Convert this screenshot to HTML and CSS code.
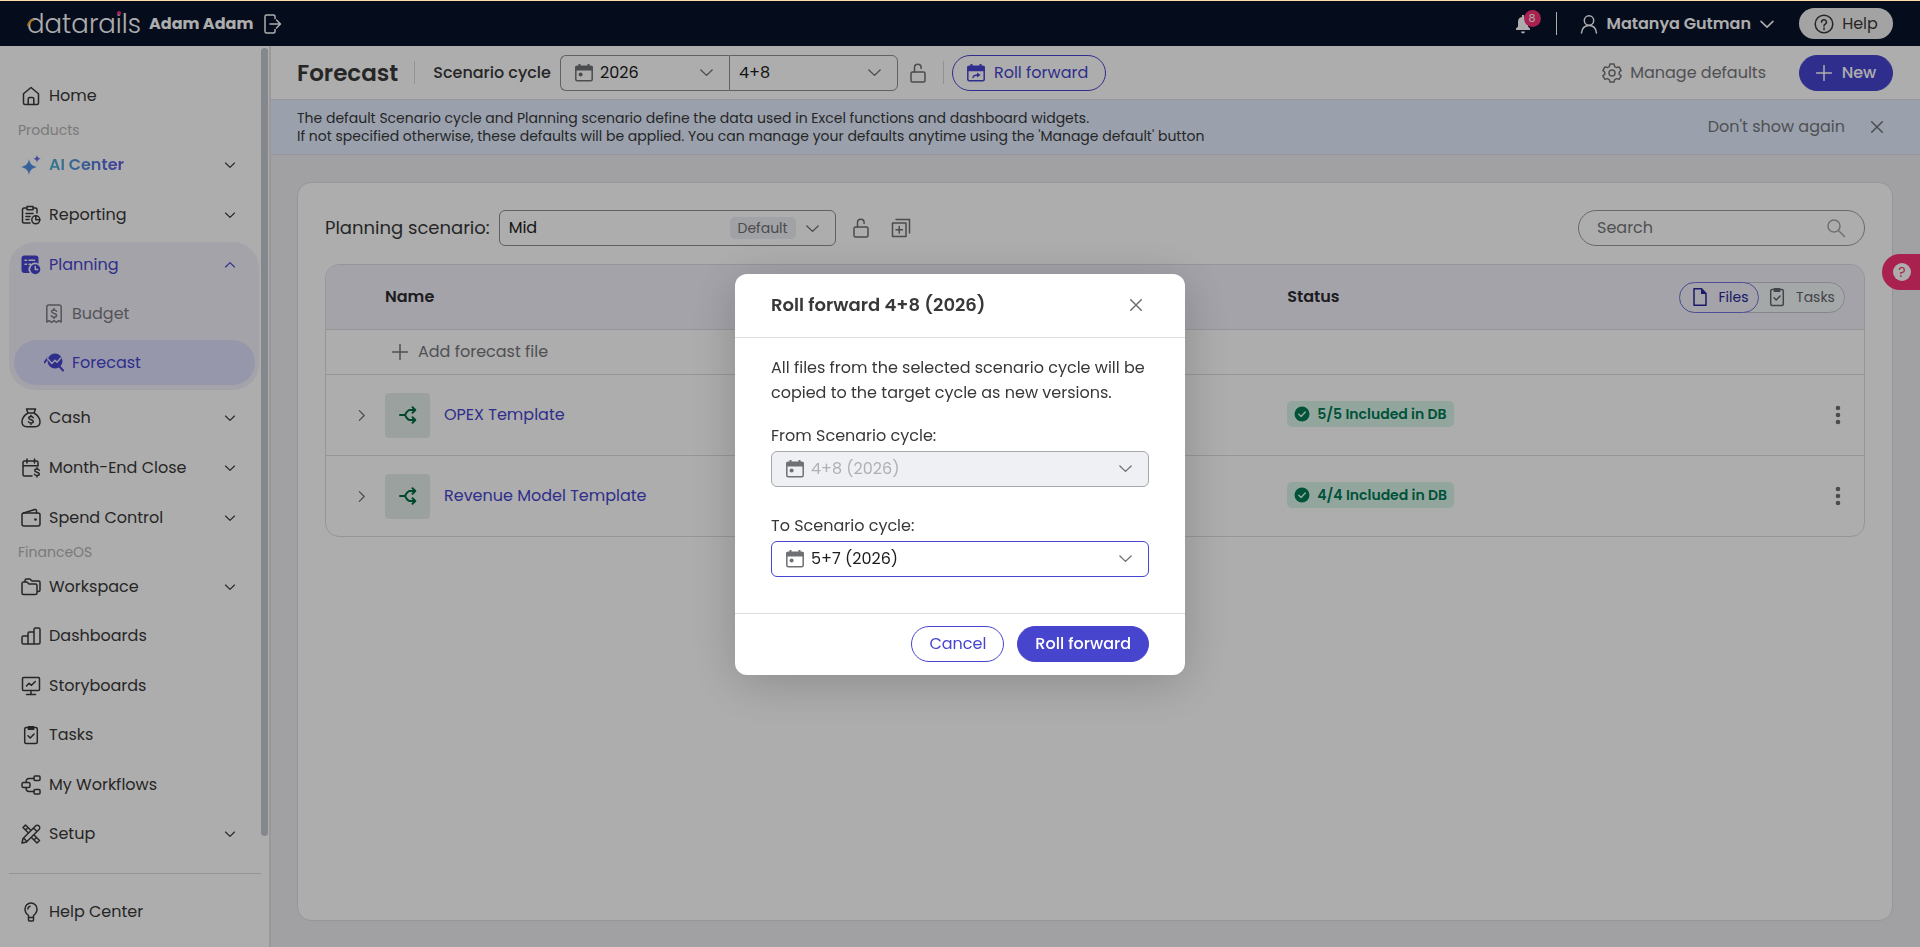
FILE: index.html
```
<!DOCTYPE html>
<html lang="en">
<head>
  <meta charset="UTF-8">
  <meta name="viewport" content="width=device-width, initial-scale=1.0">
  <title>Forecast - Datarails</title>
  <link rel="stylesheet" href="styles.css">
</head>
<body>
  <svg class="sprite" aria-hidden="true">
    <symbol id="i-down" viewBox="0 0 12 12"><path d="M1.5 4 6 8.3 10.5 4"/></symbol>
    <symbol id="i-up" viewBox="0 0 12 12"><path d="M1.5 8 6 3.7 10.5 8"/></symbol>
    <symbol id="i-right" viewBox="0 0 12 12"><path d="M4 1.5 8.5 6 4 10.5"/></symbol>
    <symbol id="i-close" viewBox="0 0 12 12"><path d="M.7.7l10.6 10.6M11.3.7.7 11.3"/></symbol>
    <symbol id="i-plus" viewBox="0 0 16 16"><path d="M8 .5v15M.5 8h15"/></symbol>
    <symbol id="i-cal" viewBox="0 0 20 20"><rect x="1.8" y="3.2" width="16.4" height="14.6" rx="1.5"/><path d="M1.5 3h17v4.5h-17zM4.5 1h2v3h-2zM13.5 1h2v3h-2z" fill="currentColor" stroke="none"/><circle cx="6.6" cy="11.4" r="2" fill="currentColor" stroke="none"/></symbol>
    <symbol id="i-calroll" viewBox="0 0 20 20"><rect x="1.8" y="3.2" width="16.4" height="14.6" rx="1.5"/><path d="M1.5 3h17v5.3h-17zM4.5 1h2v3h-2zM13.5 1h2v3h-2z" fill="currentColor" stroke="none"/><path d="M7 14.5c.3-1.8 1.6-2.5 5-2.5"/><path d="m11 9.6 3.6 2.5-3.6 2.5z" fill="currentColor" stroke="none"/></symbol>
    <symbol id="i-lock" viewBox="0 0 20 20"><rect x="3" y="9" width="14" height="10" rx="1.5"/><path d="M6.5 9V4.600a3.300 3.300 0 0 1 6.600 0V5.600"/></symbol>
    <symbol id="i-task" viewBox="0 0 20 20"><rect x="3.700" y="2.500" width="12.600" height="16" rx="1.500"/><path d="M6.700 1h6.600v4H6.700z" fill="currentColor" stroke="none"/><path d="m7 10.800 2.200 2.200 3.900-4"/></symbol>
    <symbol id="i-share" viewBox="0 0 20 20"><path d="M2 10h5c1.500-3 2.500-5 5-5h5M7 10c1.500 3 2.500 5 5 5h5M14.500 2.300 17.300 5l-2.800 2.700M14.500 12.300l2.800 2.700-2.800 2.700"/></symbol>
    <symbol id="i-check" viewBox="0 0 16 16"><circle cx="8" cy="8" r="7.500" fill="currentColor" stroke="none"/><path d="m4.800 8.300 2.300 2.200 4.200-4.500" stroke="#d9f5e9"/></symbol>
    <symbol id="i-more" viewBox="0 0 6 20"><g fill="currentColor" stroke="none"><circle cx="3" cy="3" r="2.300"/><circle cx="3" cy="10" r="2.300"/><circle cx="3" cy="17" r="2.300"/></g></symbol>
  </svg>

  <header class="topbar">
    <a class="logo" href="#" aria-label="datarails">datarails<i class="logo-arc"></i><i class="logo-dot"></i></a>
    <span class="company">Adam Adam</span>
    <button class="icon-btn" aria-label="Switch company"><svg class="icon" viewBox="0 0 20 20"><path d="M12 4.500V2.500A1.500 1.500 0 0 0 10.500 1H3.500A1.500 1.500 0 0 0 2 2.500v15A1.500 1.500 0 0 0 3.500 19h7a1.500 1.500 0 0 0 1.500-1.500V15.500M7 10H17M13.500 6l4 4-4 4"/></svg></button>
    <div class="topbar-right">
      <button class="bell" aria-label="Notifications"><svg class="icon" viewBox="0 0 20 20"><path d="M3 16v-1.500l2-2V8a5 5 0 0 1 4-5V1h2v2a5 5 0 0 1 4 5v4.500l2 2V16zM8 17.500h4a2 2 0 0 1-4 0z" fill="currentColor" stroke="none"/></svg><span class="bell-count">8</span></button>
      <span class="topbar-line"></span>
      <button class="user"><svg class="icon" viewBox="0 0 20 20"><circle cx="10" cy="6.500" r="4.700"/><path d="M2.500 19c.5-4.500 3.200-7.500 7.500-7.500s7 3 7.500 7.500"/></svg>Matanya Gutman<svg class="icon chev-lg"><use href="#i-down"/></svg></button>
      <button class="help"><svg class="icon" viewBox="0 0 20 20"><circle cx="10" cy="10" r="8.800"/><path d="M7.600 8.200a2.400 2.400 0 1 1 3.600 2c-.8.500-1.200.9-1.200 1.900M10 14v1.400"/></svg>Help</button>
    </div>
  </header>

  <div class="layout">
    <aside class="sidebar">
      <nav class="menu">
        <a class="menu-item" href="#"><svg class="icon" viewBox="0 0 20 20"><path d="M2.500 7.800 10 1.500l7.500 6.300V17a1.500 1.500 0 0 1-1.500 1.500H4A1.500 1.500 0 0 1 2.500 17zM7.200 18.500V13a1.500 1.500 0 0 1 1.500-1.500h2.600a1.500 1.500 0 0 1 1.500 1.500v5.500"/></svg>Home</a>
        <h2 class="menu-label">Products</h2>
        <ul class="menu-list">
          <li><a class="menu-item" href="#"><svg class="icon" viewBox="0 0 20 20"><g fill="#538ee8" stroke="none"><path d="M8 4c1 5 2.500 6.500 8 8-5.500 1.500-7 3-8 8-1-5-2.500-6.500-8-8 5.500-1.500 7-3 8-8z"/><path d="M16 0c.5 2.400 1.200 3 3.800 3.700-2.600.7-3.300 1.400-3.800 3.700-.5-2.300-1.200-3-3.800-3.700C14.800 3 15.500 2.400 16 0z" fill="#6a6ae6"/></g></svg><span class="ai-text">AI Center</span><svg class="icon chev"><use href="#i-down"/></svg></a></li>
          <li><a class="menu-item" href="#"><svg class="icon" viewBox="0 0 20 20"><path d="M6 3H3a1.500 1.500 0 0 0-1.500 1.500v12A1.500 1.500 0 0 0 3 18h6M12 3h2.500A1.500 1.500 0 0 1 16 4.500V8M6 1.500h6v3.300H6zM5 8.500h7M5 11.500h4M5 14.500h3"/><circle cx="14.800" cy="14.800" r="4"/><path d="M14.800 10.800v4h4"/></svg>Reporting<svg class="icon chev"><use href="#i-down"/></svg></a></li>
          <li class="menu-group">
            <a class="menu-item open" href="#"><svg class="icon" viewBox="0 0 20 20"><path d="M3.500.500h11a3 3 0 0 1 3 3v5.200a6.500 6.500 0 0 0-8.700 9.300H3.500a3 3 0 0 1-3-3V3.500a3 3 0 0 1 3-3z" fill="currentColor" stroke="none"/><path d="M4 5.200h1.500M8 5.200h5.500M4 9.200h1.500M8 9.200h1.500" stroke="#f1f0fa"/><circle cx="14.300" cy="14.300" r="5" fill="currentColor" stroke="none"/><path d="M14.300 11.500v3h2.400" stroke="#f1f0fa"/></svg>Planning<svg class="icon chev"><use href="#i-up"/></svg></a>
            <a class="menu-item sub" href="#"><svg class="icon" viewBox="0 0 20 20"><path d="M2.800 18V3a2 2 0 0 1 2-2h10.400a2 2 0 0 1 2 2v15l-2.400-1.300-2.400 1.600-2.400-1.600-2.400 1.600-2.400-1.600zM12.500 7.200c-.4-1-1.200-1.300-2.500-1.300-1.500 0-2.400.6-2.400 1.700 0 2.700 5 1 5 3.800 0 1.100-1 1.700-2.600 1.700-1.400 0-2.300-.4-2.700-1.400M10 4.500v1.300M10 13.200v1.300"/></svg>Budget</a>
            <a class="menu-item sub current" href="#"><svg class="icon" viewBox="0 0 20 20"><circle cx="11" cy="8" r="7.500" fill="currentColor" stroke="none"/><path d="m15.500 13.500 3.500 4M.500 9.500l3-4" stroke-width="2"/><path d="m3.500 5.500 4.300 5 3.200-3.300 2 2 4-4.500" stroke="#dfdffd"/></svg>Forecast</a>
          </li>
          <li><a class="menu-item" href="#"><svg class="icon" viewBox="0 0 20 20"><path d="M7 5 5.500 1h9L13 5M6.500 5h7M7 5c-3.500 2-6 5.500-6 9 0 3.200 2 4.700 5 4.700h8c3 0 5-1.500 5-4.700 0-3.500-2.500-7-6-9M12.300 9.700c-.4-.9-1.200-1.200-2.300-1.200-1.300 0-2.200.5-2.200 1.500 0 2.400 4.500 1 4.500 3.500 0 1-.9 1.500-2.300 1.500-1.300 0-2.100-.4-2.500-1.300M10 7.200v1.200M10 15.200v1.200"/></svg>Cash<svg class="icon chev"><use href="#i-down"/></svg></a></li>
          <li><a class="menu-item" href="#"><svg class="icon" viewBox="0 0 20 20"><path d="M11 18H3.500A1.500 1.500 0 0 1 2 16.500v-12A1.500 1.500 0 0 1 3.500 3h12A1.500 1.500 0 0 1 17 4.500V8M2 7.800h15M6 1v4M13.500 1v4M18.300 12.300c-.4-.9-1.200-1.200-2.300-1.200-1.300 0-2.200.5-2.200 1.500 0 2.400 4.500 1 4.500 3.500 0 1-.9 1.500-2.300 1.500-1.300 0-2.100-.4-2.500-1.300M16 9.700v1.200M16 17.700V19"/></svg>Month-End Close<svg class="icon chev"><use href="#i-down"/></svg></a></li>
          <li><a class="menu-item" href="#"><svg class="icon" viewBox="0 0 20 20"><rect x="1" y="5" width="18" height="13" rx="2"/><path d="m2.500 5 11.300-3.500a1.300 1.300 0 0 1 1.700 1.200V5"/><circle cx="14.500" cy="11.500" r="1.300" fill="currentColor" stroke="none"/></svg>Spend Control<svg class="icon chev"><use href="#i-down"/></svg></a></li>
        </ul>
        <h2 class="menu-label">FinanceOS</h2>
        <ul class="menu-list finance">
          <li><a class="menu-item" href="#"><svg class="icon" viewBox="0 0 20 20"><path d="M1 6.500A1.500 1.500 0 0 1 2.500 5H6l2 2h6.500A1.500 1.500 0 0 1 16 8.500V16a1.500 1.500 0 0 1-1.500 1.500h-12A1.500 1.500 0 0 1 1 16zM4 5V3.500A1.500 1.500 0 0 1 5.500 2H9l2 2h6.500A1.500 1.500 0 0 1 19 5.500V13a1.500 1.500 0 0 1-1.500 1.500H16"/></svg>Workspace<svg class="icon chev"><use href="#i-down"/></svg></a></li>
          <li><a class="menu-item" href="#"><svg class="icon" viewBox="0 0 20 20"><path d="M7 18V7.500A1.500 1.500 0 0 1 8.500 6H13v12M7 10H2.500A1.500 1.500 0 0 0 1 11.500v5A1.500 1.500 0 0 0 2.500 18h15a1.500 1.500 0 0 0 1.500-1.500v-13A1.500 1.500 0 0 0 17.500 2h-3A1.500 1.500 0 0 0 13 3.500V6"/></svg>Dashboards</a></li>
          <li><a class="menu-item" href="#"><svg class="icon" viewBox="0 0 20 20"><rect x="1.500" y="1.500" width="17" height="13" rx="1"/><path d="M10 14.500V18.500M5.500 18.500h9M5.500 10 8 7.300l2.500 2L14.300 5.500"/></svg>Storyboards</a></li>
          <li><a class="menu-item" href="#"><svg class="icon"><use href="#i-task"/></svg>Tasks</a></li>
          <li><a class="menu-item" href="#"><svg class="icon" viewBox="0 0 20 20"><rect x="1" y="7.500" width="8" height="5" rx="1.500"/><rect x="13" y="1" width="6" height="4.500" rx="1"/><rect x="13" y="14.500" width="6" height="4.500" rx="1"/><path d="M5 7.500C5 5 6 3.500 8 3.500h5M5 12.500c0 2.500 1 4 3 4h5"/></svg>My Workflows</a></li>
          <li><a class="menu-item" href="#"><svg class="icon" viewBox="0 0 20 20"><path d="M7.500 9 2 3.500 4.500 1 10 6.500M13 11l5.500 5.500L16 19l-5.500-5.500M4.500 6 6 4.500M14 15l1.500-1.500M1 19l1-4.500L14.500 2a2 2 0 0 1 3.500 3.500L5.500 18zM12.500 4l3.500 3.500M2.500 14l3.500 3.500"/></svg>Setup<svg class="icon chev"><use href="#i-down"/></svg></a></li>
        </ul>
      </nav>
      <div class="scroll-thumb"></div>
      <div class="sidebar-foot">
        <a class="menu-item" href="#"><svg class="icon" viewBox="0 0 20 20"><path d="M7.500 15.500v-2C5.500 12 4 10 4 7a6 6 0 0 1 12 0c0 3-1.500 5-3.500 6.500v2zM7.500 15.500V18a1 1 0 0 0 1 1h3a1 1 0 0 0 1-1v-2.500M6.800 7A3 3 0 0 1 9 4.300"/></svg>Help Center</a>
      </div>
    </aside>

    <main class="main">
      <div class="page-head">
        <h1>Forecast</h1>
        <span class="vline"></span>
        <span class="cycle-label">Scenario cycle</span>
        <div class="cycle">
          <label class="select"><svg class="icon lead"><use href="#i-cal"/></svg><select class="with-icon" aria-label="Year"><option>2026</option></select><svg class="icon caret"><use href="#i-down"/></svg></label>
          <label class="select"><select aria-label="Cycle"><option>4+8</option></select><svg class="icon caret"><use href="#i-down"/></svg></label>
        </div>
        <button class="icon-btn gray" aria-label="Unlock cycle"><svg class="icon"><use href="#i-lock"/></svg></button>
        <span class="vline head-line"></span>
        <button class="btn btn-outline"><svg class="icon"><use href="#i-calroll"/></svg>Roll forward</button>
        <button class="text-btn manage"><svg class="icon" viewBox="0 0 20 20"><circle cx="10" cy="10" r="3"/><path d="m8 1h4l.7 2.600 1.800 1L17.100 4l2 3.400-1.900 1.900v1.800l1.900 1.800-2 3.400-2.600-.7-1.800 1L12 19H8l-.7-2.400-1.800-1-2.600.7-2-3.400 1.900-1.800V9.300L.900 7.400l2-3.400 2.600.6 1.800-1z"/></svg>Manage defaults</button>
        <button class="btn btn-primary new"><svg class="icon"><use href="#i-plus"/></svg>New</button>
      </div>

      <div class="banner">
        <p>The default Scenario cycle and Planning scenario define the data used in Excel functions and dashboard widgets.<br>If not specified otherwise, these defaults will be applied. You can manage your defaults anytime using the 'Manage default' button</p>
        <button class="text-btn">Don't show again</button>
        <button class="icon-btn gray x" aria-label="Close"><svg class="icon"><use href="#i-close"/></svg></button>
      </div>

      <section class="card">
        <div class="toolbar">
          <label class="scenario-label" for="scenario">Planning scenario:</label>
          <div class="select scenario">
            <select id="scenario"><option>Mid</option></select>
            <span class="default-tag">Default</span>
            <svg class="icon caret"><use href="#i-down"/></svg>
          </div>
          <button class="icon-btn gray" aria-label="Unlock scenario"><svg class="icon"><use href="#i-lock"/></svg></button>
          <button class="icon-btn gray" aria-label="Duplicate scenario"><svg class="icon" viewBox="0 0 20 20"><rect x="1.500" y="5" width="13.500" height="13.500"/><path d="M5 1.500h13.500V15M8.250 8.500v6.500M5 11.750h6.500"/></svg></button>
          <label class="search"><input type="text" placeholder="Search" aria-label="Search"><svg class="icon" viewBox="0 0 20 20"><circle cx="8" cy="8" r="6"/><path d="m12.500 12.500 6 6"/></svg></label>
        </div>

        <div class="table-wrap">
          <table class="files">
            <colgroup><col class="c-exp"><col><col class="c-status"><col class="c-act"></colgroup>
            <thead>
              <tr><th></th><th>Name</th><th>Status</th><th>
                <div class="toggle">
                  <button class="on"><svg class="icon" viewBox="0 0 20 20"><path d="M4 1.800h7.500L16 6.500v11.700H4z"/><path d="M11 1.500 16.500 7H11z" fill="currentColor" stroke="none"/></svg>Files</button>
                  <button><svg class="icon"><use href="#i-task"/></svg>Tasks</button>
                </div>
              </th></tr>
            </thead>
            <tbody>
              <tr class="add-row"><td></td><td colspan="3"><button class="text-btn add"><svg class="icon"><use href="#i-plus"/></svg>Add forecast file</button></td></tr>
              <tr>
                <td class="exp"><button class="icon-btn gray" aria-label="Expand"><svg class="icon"><use href="#i-right"/></svg></button></td>
                <td><a class="file" href="#"><span class="tile"><svg class="icon"><use href="#i-share"/></svg></span>OPEX Template</a></td>
                <td><span class="status"><svg class="icon"><use href="#i-check"/></svg>5/5 Included in DB</span></td>
                <td class="act"><button class="icon-btn gray" aria-label="More"><svg class="icon dots"><use href="#i-more"/></svg></button></td>
              </tr>
              <tr>
                <td class="exp"><button class="icon-btn gray" aria-label="Expand"><svg class="icon"><use href="#i-right"/></svg></button></td>
                <td><a class="file" href="#"><span class="tile"><svg class="icon"><use href="#i-share"/></svg></span>Revenue Model Template</a></td>
                <td><span class="status"><svg class="icon"><use href="#i-check"/></svg>4/4 Included in DB</span></td>
                <td class="act"><button class="icon-btn gray" aria-label="More"><svg class="icon dots"><use href="#i-more"/></svg></button></td>
              </tr>
            </tbody>
          </table>
        </div>
      </section>
    </main>
  </div>

  <button class="side-help" aria-label="Support"><span>?</span></button>

  <div class="overlay">
    <div class="modal" role="dialog" aria-labelledby="modal-title">
      <div class="modal-head">
        <h2 id="modal-title">Roll forward 4+8 (2026)</h2>
        <button class="icon-btn gray x" aria-label="Close dialog"><svg class="icon"><use href="#i-close"/></svg></button>
      </div>
      <div class="modal-body">
        <p>All files from the selected scenario cycle will be copied to the target cycle as new versions.</p>
        <div class="field">
          <label for="from">From Scenario cycle:</label>
          <div class="select disabled"><svg class="icon lead"><use href="#i-cal"/></svg><select id="from" class="with-icon" disabled><option>4+8 (2026)</option></select><svg class="icon caret"><use href="#i-down"/></svg></div>
        </div>
        <div class="field">
          <label for="to">To Scenario cycle:</label>
          <div class="select focused"><svg class="icon lead"><use href="#i-cal"/></svg><select id="to" class="with-icon"><option>5+7 (2026)</option></select><svg class="icon caret"><use href="#i-down"/></svg></div>
        </div>
      </div>
      <div class="modal-foot">
        <button class="btn btn-outline">Cancel</button>
        <button class="btn btn-primary">Roll forward</button>
      </div>
    </div>
  </div>
</body>
</html>
```

FILE: styles.css
```
* { margin: 0; padding: 0; box-sizing: border-box; }
body {
  height: 100vh; display: flex; flex-direction: column; overflow: hidden;
  border-top: 1px solid #ffdcae;
  font: 16px/24px Poppins, Inter, sans-serif; color: #383838; background: #edeef1;
}
button, input, select { font: inherit; color: inherit; background: none; border: 0; outline: 0; }
button { cursor: pointer; white-space: nowrap; }
a { color: inherit; text-decoration: none; }
ul { list-style: none; }
.sprite { position: absolute; width: 0; height: 0; }
.icon {
  width: 20px; height: 20px; flex: none; fill: none; stroke: currentColor;
  stroke-width: 1.5; stroke-linecap: round; stroke-linejoin: round;
}
.icon-btn { display: flex; align-items: center; justify-content: center; }
.gray { color: #6f7074; }
.x .icon { width: 12px; height: 12px; }

/* Top bar */
.topbar {
  height: 45px; flex: none; display: flex; align-items: center;
  padding: 0 27px; background: #08122a; color: #fff;
}
.logo { position: relative; font: 300 26px/32px Poppins, Inter, sans-serif; width: 113px; margin-right: 9px; }
.logo-arc {
  position: absolute; left: 0; top: 11px; width: 14px; height: 14px; border-radius: 50%;
  border: 2px solid transparent; border-left-color: #f5a51c; transform: rotate(45deg);
}
.logo-dot { position: absolute; left: 90px; top: 3px; width: 4px; height: 4px; border-radius: 50%; background: #f93174; }
.company { font-weight: 700; margin-right: 10px; }
.topbar-right { margin-left: auto; display: flex; align-items: center; }
.bell { position: relative; display: flex; }
.bell-count {
  position: absolute; left: 11px; top: -4px; width: 17px; height: 17px; border-radius: 50%;
  background: #f93174; font-size: 11px; line-height: 17px; text-align: center;
}
.topbar-line { width: 1px; height: 23px; background: #fff; margin: 0 22px 0 23px; }
.user { display: flex; align-items: center; font-weight: 600; gap: 8px; margin-right: 24px; }
.chev-lg { width: 16px; height: 16px; stroke-width: 1.2; }
.help {
  width: 94px; height: 31px; display: flex; align-items: center; justify-content: center; gap: 8px;
  border-radius: 16px; background: #f1f1f1; color: #383838;
}

/* Sidebar */
.layout { flex: 1; min-height: 0; display: flex; }
.sidebar {
  position: relative; width: 271px; flex: none; display: flex; flex-direction: column;
  background: #fff; border-right: 2px solid #e2e2e6;
}
.menu { flex: 1; display: flex; flex-direction: column; padding: 27px 10px 16px 9px; }
.menu-item { height: 45px; display: flex; align-items: center; gap: 8px; padding: 0 23px 0 12px; }
.menu-label { height: 24px; padding-left: 9px; font-size: 14px; font-weight: 400; color: #b4b4b4; }
.menu-list { display: flex; flex-direction: column; gap: 5px; }
.finance { flex: 1; justify-content: space-between; gap: 0; }
.chev { width: 12px; height: 12px; margin-left: auto; stroke-width: 1.1; }
.ai-text {
  font-weight: 600; color: transparent; background: linear-gradient(90deg, #4fb2d2, #6259e0);
  background-clip: text; -webkit-background-clip: text;
}
.menu-group {
  display: flex; flex-direction: column; gap: 4px; padding-bottom: 5px;
  border-radius: 26px; background: #f1f0fa;
}
.open { color: #4745ce; }
.sub { margin: 0 4px 0 5px; padding-left: 30px; color: #7d7d81; }
.current { border-radius: 23px; background: #dfdffd; color: #4745ce; }
.scroll-thumb {
  position: absolute; right: 1px; top: 2px; bottom: 111px; width: 7px;
  border-radius: 4px; background: #c3c8cf;
}
.sidebar-foot { margin: 0 8px 0 9px; padding: 15px 0 13px; border-top: 1px solid #dcdcde; }

/* Page header */
.main { flex: 1; min-width: 0; display: flex; flex-direction: column; }
.page-head {
  height: 54px; flex: none; display: flex; align-items: center;
  padding: 0 27px 0 26px; background: #fff; border-bottom: 1px solid #dcdfe6;
}
h1 { font-size: 23px; line-height: 36px; font-weight: 600; }
.vline { width: 1px; height: 23px; background: #d8d8dc; margin: 0 18px 0 16px; }
.head-line { margin: 0 8px 0 15px; }
.cycle-label { font-weight: 500; margin-right: 9px; }
.cycle { display: flex; margin-right: 10px; }
.cycle .select { width: 169px; }
.cycle .select:first-child { border-radius: 6px 0 0 6px; border-right: 0; }
.cycle .select:last-child { border-radius: 0 6px 6px 0; }
.select {
  height: 36px; display: flex; align-items: center; position: relative;
  border: 1px solid #8d8f96; border-radius: 6px; color: #1c1c1e; background: #fff;
}
.select select { appearance: none; width: 100%; height: 34px; padding: 0 40px 0 9px; }
.select .with-icon { padding-left: 39px; }
.lead, .caret { position: absolute; color: #6f7074; pointer-events: none; }
.lead { left: 13px; }
.caret { right: 15px; width: 15px; height: 15px; stroke-width: 1.1; }
.btn {
  height: 36px; display: flex; align-items: center; justify-content: center; gap: 8px;
  padding: 0 17px; border-radius: 18px; border: 1px solid #4745ce;
}
.btn-outline { color: #4745ce; }
.btn-primary { background: #4745ce; color: #fff; font-weight: 500; }
.page-head .btn-outline { padding: 0 17px 0 13px; }
.text-btn { display: flex; align-items: center; gap: 8px; color: #76777b; }
.manage { margin-left: auto; margin-right: 33px; }
.new { width: 94px; padding: 0; gap: 10px; }
.new .icon, .add .icon { width: 16px; height: 16px; }

.banner {
  height: 55px; flex: none; display: flex; align-items: center; gap: 26px;
  padding: 0 37px 0 26px; background: #e3edff; border-bottom: 1px solid #dcdfe6;
}
.banner p { font-size: 14px; line-height: 18px; }
.banner .text-btn { margin-left: auto; }

/* Content card */
.card {
  flex: 1; margin: 27px 27px 26px 26px; padding: 27px;
  background: #fff; border: 1px solid #dcdde0; border-radius: 14px;
}
.toolbar { display: flex; align-items: center; margin-bottom: 18px; }
.scenario-label { font-size: 18px; margin-right: 9px; }
.scenario { width: 337px; margin-right: 15px; }
.default-tag {
  position: absolute; right: 39px; height: 22px; padding: 0 8px; border-radius: 5px;
  background: #eeeff3; color: #6f7074; font-size: 14px; line-height: 22px; pointer-events: none;
}
.toolbar .icon-btn { margin-right: 20px; }
.search {
  width: 287px; height: 36px; margin-left: auto; display: flex; align-items: center;
  padding: 0 18px; border: 1px solid #9a9ba1; border-radius: 18px; color: #a5a5a9;
}
.search input { flex: 1; min-width: 0; color: #383838; }
.search input::placeholder { color: #76777b; }

.table-wrap { border: 1px solid #dcdde0; border-radius: 14px; overflow: hidden; }
.files { width: 100%; table-layout: fixed; border-collapse: separate; border-spacing: 0; }
.c-exp { width: 59px; }
.c-status { width: 23%; }
.c-act { width: 14.5%; }
.files th { height: 64px; text-align: left; font-weight: 600; background: #f1f0fa; color: #2c2c2e; }
.files td { height: 81px; border-top: 1px solid #dcdde0; vertical-align: middle; }
.files .add-row td { height: 45px; }
.add { padding-left: 7px; gap: 10px; }
.exp .icon-btn { margin-left: 24px; width: 22px; }
.exp .icon { width: 13px; height: 13px; stroke-width: 1.1; }
.file { display: flex; align-items: center; gap: 14px; color: #4745ce; }
.tile {
  width: 45px; height: 45px; display: flex; align-items: center; justify-content: center;
  border-radius: 4px; background: #e4eeeb; color: #006b40;
}
.tile .icon { stroke-width: 2; }
.status {
  display: inline-flex; align-items: center; gap: 7px; height: 26px; padding: 0 7px;
  border-radius: 5px; background: #d9f5e9; color: #007a55; font-size: 14px; font-weight: 600;
}
.status .icon { width: 16px; height: 16px; }
.act .icon-btn { margin: 0 15px 0 auto; width: 22px; }
.dots { width: 6px; }
.toggle {
  width: 166px; height: 31px; margin: 0 19px 0 auto; display: flex;
  border: 1px solid #c6c7d0; border-radius: 16px; background: #f4f8f8;
}
.toggle button {
  display: flex; flex: 1; align-items: center; justify-content: center; gap: 9px;
  font-size: 14px; font-weight: 400; color: #63656f;
}
.toggle .on { flex: none; width: 80px; margin: -1px; border: 1px solid #7775dd; border-radius: 16px; background: #f1f0fa; color: #29279c; }

.side-help {
  position: fixed; right: 0; top: 254px; width: 38px; height: 36px; display: flex;
  align-items: center; padding-left: 11px; border-radius: 18px 0 0 18px; background: #f93174;
}
.side-help span { width: 18px; height: 18px; border-radius: 50%; background: #fff; color: #f93174; font-size: 14px; line-height: 18px; }

/* Roll forward dialog */
.overlay {
  position: fixed; inset: 1px 0 0; display: flex; align-items: center; justify-content: center;
  background: rgba(0, 0, 0, 0.32);
}
.modal {
  width: 450px; border-radius: 12px; background: #fff;
  box-shadow: 0 8px 50px rgba(0, 0, 0, 0.2);
}
.modal-head {
  height: 64px; display: flex; align-items: center; justify-content: space-between;
  padding: 0 43px 0 36px; border-bottom: 1px solid #dedee2;
}
.modal-head h2 { font-size: 18px; font-weight: 600; }
.modal-body { padding: 17px 36px 36px; }
.modal-body p { line-height: 25px; margin-bottom: 19px; }
.field label { display: block; line-height: 24px; margin-bottom: 3px; }
.field + .field { margin-top: 27px; }
.disabled { background: #eff0f4; border-color: #a6a7ac; color: #b0b0b3; }
.disabled select { opacity: 1; }
.focused { border-color: #4745ce; }
.modal-foot {
  display: flex; justify-content: flex-end; gap: 13px;
  padding: 12px 36px 13px; border-top: 1px solid #dedee2;
}
```
